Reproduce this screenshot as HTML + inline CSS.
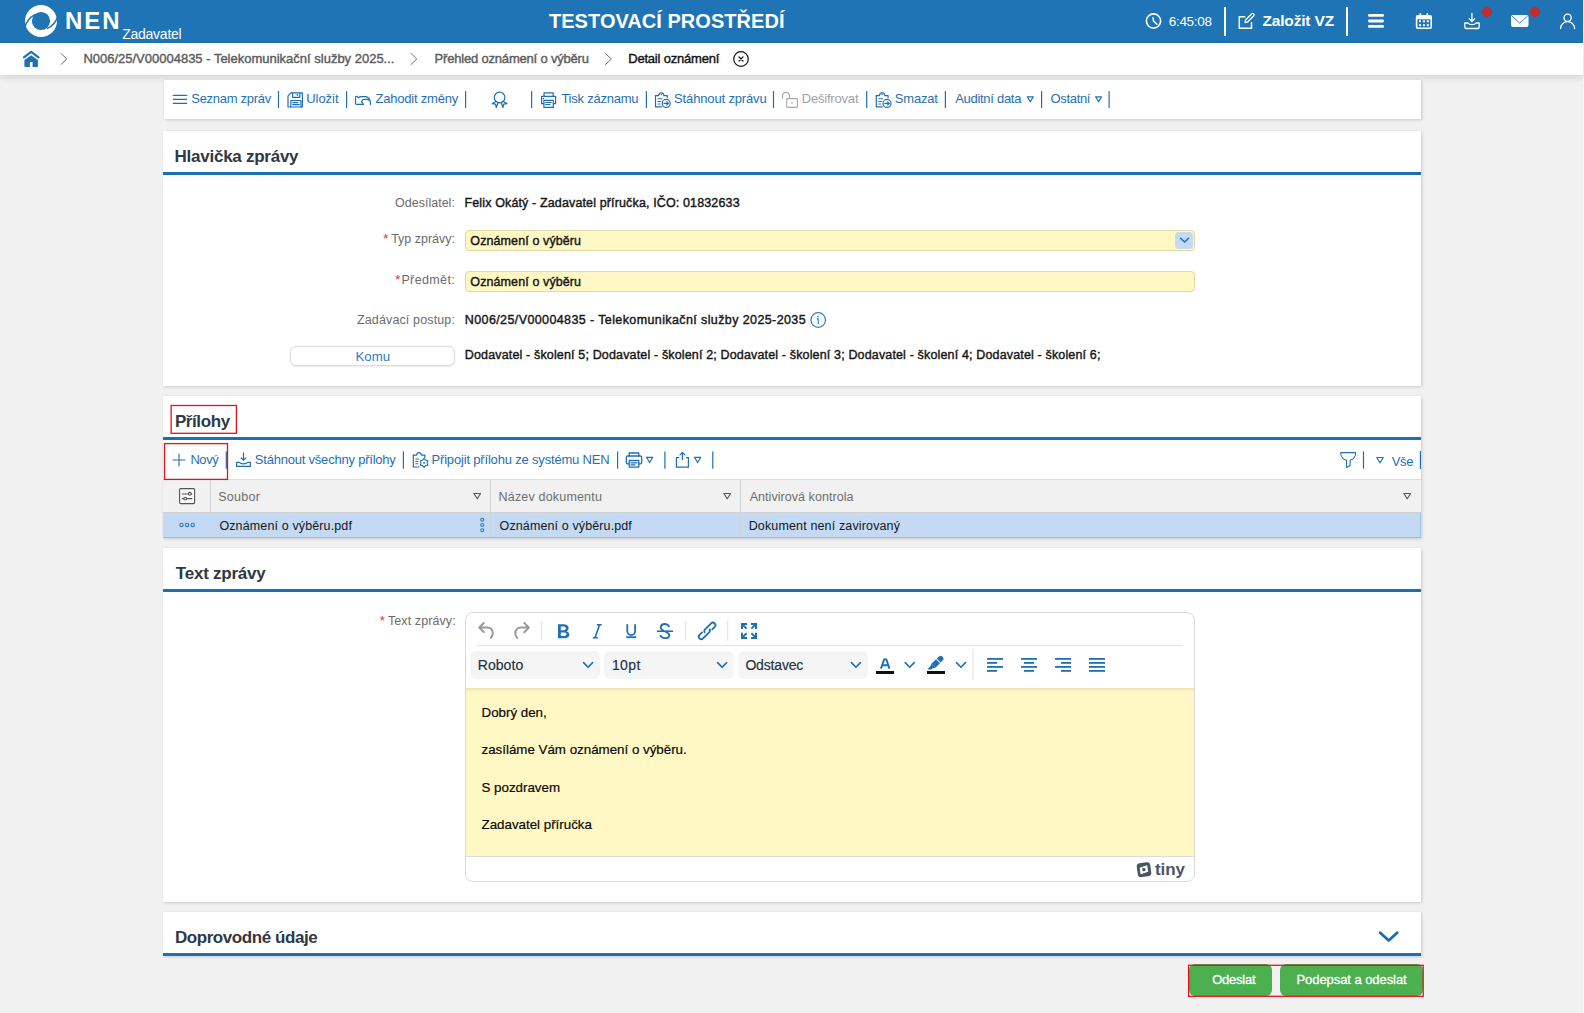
<!DOCTYPE html>
<html><head><meta charset="utf-8"><title>NEN</title><style>
html,body{margin:0;padding:0;}
body{width:1584px;height:1013px;overflow:hidden;background:#f1f1f1;position:relative;font-family:"Liberation Sans",sans-serif;}
.t{position:absolute;white-space:nowrap;line-height:1;}
.b{position:absolute;box-sizing:border-box;}
.card{position:absolute;background:#fff;box-shadow:1px 1px 3px rgba(0,0,0,0.16);}
svg.ov{position:absolute;left:0;top:0;}
</style></head>
<body>

<div class="b" style="left:0;top:0;width:1583px;height:43px;background:#1e74b4"></div>
<div class="b" style="left:1583px;top:0;width:1px;height:1013px;background:#f7f7f7"></div>
<div class="b" style="left:0;top:43px;width:1583px;height:32px;background:#fff;box-shadow:0 3px 6px rgba(0,0,0,0.11)"></div>
<div class="card" style="left:164px;top:80px;width:1257px;height:39px"></div>
<div class="card" style="left:163px;top:131px;width:1258px;height:255px"></div>
<div class="b" style="left:163px;top:172px;width:1258px;height:3px;background:#1b6fb2"></div>
<!-- select -->
<div class="b" style="left:465px;top:230px;width:730px;height:21px;background:#fff8c4;border:1px solid #e0d9a6;border-radius:4px"></div>
<div class="b" style="left:1175px;top:232px;width:18px;height:17px;background:#c3daf3;border-radius:4px"></div>
<div class="b" style="left:465px;top:271px;width:730px;height:21px;background:#fff8c4;border:1px solid #e0d9a6;border-radius:4px"></div>
<div class="b" style="left:290px;top:346px;width:165px;height:20px;background:#fff;border:1px solid #dcdcdc;border-radius:6px;box-shadow:0 1px 2px rgba(0,0,0,0.08)"></div>
<!-- prilohy -->
<div class="card" style="left:163px;top:396px;width:1258px;height:142px"></div>
<div class="b" style="left:163px;top:437px;width:1258px;height:3px;background:#1b6fb2"></div>
<div class="b" style="left:163px;top:479px;width:1258px;height:33px;background:#f1f1f1;border-top:1px solid #dedede"></div>
<div class="b" style="left:163px;top:512px;width:1258px;height:26px;background:#c4daf4;border-top:1px solid #d2d2d2;border-bottom:1px solid #8fbbec;border-right:1px solid #9dc2ec"></div>
<div class="b" style="left:210px;top:480px;width:1px;height:32px;background:#d3d3d3"></div>
<div class="b" style="left:490px;top:480px;width:1px;height:57px;background:#d3d3d3"></div>
<div class="b" style="left:740px;top:480px;width:1px;height:57px;background:#d3d3d3"></div>
<!-- text zpravy -->
<div class="card" style="left:163px;top:548px;width:1258px;height:354px"></div>
<div class="b" style="left:163px;top:589px;width:1258px;height:3px;background:#1b6fb2"></div>
<div class="b" style="left:465px;top:612px;width:730px;height:270px;background:#fff;border:1px solid #dadada;border-radius:8px"></div>
<div class="b" style="left:477px;top:645px;width:706px;height:1px;background:#e3e3e3"></div>
<div class="b" style="left:470px;top:651px;width:130px;height:28px;background:#f5f5f5;border-radius:6px"></div>
<div class="b" style="left:604px;top:651px;width:130px;height:28px;background:#f5f5f5;border-radius:6px"></div>
<div class="b" style="left:738px;top:651px;width:130px;height:28px;background:#f5f5f5;border-radius:6px"></div>
<div class="b" style="left:466px;top:688px;width:728px;height:169px;background:#fff8c4;border-bottom:1px solid #dcdcdc;box-shadow:inset 0 4px 4px -3px rgba(0,0,0,0.12)"></div>
<!-- doprovodne -->
<div class="card" style="left:163px;top:912px;width:1258px;height:44px"></div>
<div class="b" style="left:163px;top:953px;width:1258px;height:3px;background:#1b6fb2"></div>
<!-- buttons -->
<div class="b" style="left:1189px;top:964px;width:83px;height:32px;background:#4caf50;border-radius:6px"></div>
<div class="b" style="left:1280px;top:964px;width:143px;height:32px;background:#4caf50;border-radius:6px"></div>

<div class="t" style="left:65.0px;top:9px;font-size:24px;font-weight:700;letter-spacing:2.0px;color:#fff;">NEN</div>
<div class="t" style="left:122.2px;top:27px;font-size:14px;font-weight:400;letter-spacing:-0.25px;color:#fff;">Zadavatel</div>
<div class="t" style="left:549.0px;top:11px;font-size:20px;font-weight:700;letter-spacing:0.033px;color:#fff;">TESTOVACÍ PROSTŘEDÍ</div>
<div class="t" style="left:1168.7px;top:15px;font-size:13.5px;font-weight:400;letter-spacing:-0.283px;color:#fff;">6:45:08</div>
<div class="t" style="left:1262.4px;top:13px;font-size:15.5px;font-weight:700;letter-spacing:-0.156px;color:#fff;">Založit VZ</div>
<div class="t" style="left:83.4px;top:52px;font-size:13px;font-weight:400;letter-spacing:-0.004px;color:#5c5c5c;-webkit-text-stroke:0.4px #5c5c5c;">N006/25/V00004835 - Telekomunikační služby 2025...</div>
<div class="t" style="left:434.6px;top:52px;font-size:13px;font-weight:400;letter-spacing:-0.192px;color:#5c5c5c;-webkit-text-stroke:0.4px #5c5c5c;">Přehled oznámení o výběru</div>
<div class="t" style="left:628.2px;top:52px;font-size:13px;font-weight:400;letter-spacing:-0.2px;color:#111;-webkit-text-stroke:0.4px #111;">Detail oznámení</div>
<div class="t" style="left:191.3px;top:92px;font-size:13px;font-weight:400;letter-spacing:-0.291px;color:#1f6fb3;">Seznam zpráv</div>
<div class="t" style="left:306.2px;top:92px;font-size:13px;font-weight:400;letter-spacing:-0.04px;color:#1f6fb3;">Uložit</div>
<div class="t" style="left:375.4px;top:92px;font-size:13px;font-weight:400;letter-spacing:-0.2px;color:#1f6fb3;">Zahodit změny</div>
<div class="t" style="left:561.4px;top:92px;font-size:13px;font-weight:400;letter-spacing:-0.227px;color:#1f6fb3;">Tisk záznamu</div>
<div class="t" style="left:674.1px;top:92px;font-size:13px;font-weight:400;letter-spacing:-0.15px;color:#1f6fb3;">Stáhnout zprávu</div>
<div class="t" style="left:801.7px;top:92px;font-size:13px;font-weight:400;letter-spacing:-0.189px;color:#a3a3a3;">Dešifrovat</div>
<div class="t" style="left:894.8px;top:92px;font-size:13px;font-weight:400;letter-spacing:-0.18px;color:#1f6fb3;">Smazat</div>
<div class="t" style="left:955.2px;top:92px;font-size:13px;font-weight:400;letter-spacing:-0.291px;color:#1f6fb3;">Auditní data</div>
<div class="t" style="left:1050.6px;top:92px;font-size:13px;font-weight:400;letter-spacing:-0.35px;color:#1f6fb3;">Ostatní</div>
<div class="t" style="left:174.6px;top:148px;font-size:17px;font-weight:700;letter-spacing:-0.257px;color:#303842;">Hlavička zprávy</div>
<div class="t" style="left:395.0px;top:197px;font-size:12.5px;font-weight:400;letter-spacing:0.01px;color:#6b6b6b;">Odesílatel:</div>
<div class="t" style="left:464.5px;top:197px;font-size:12.5px;font-weight:400;letter-spacing:0.135px;color:#161616;-webkit-text-stroke:0.4px #161616;">Felix Okátý - Zadavatel příručka, IČO: 01832633</div>
<div class="t" style="left:383.3px;top:232px;font-size:13px;font-weight:400;letter-spacing:0px;color:#d9303a;">*</div>
<div class="t" style="left:391.2px;top:233px;font-size:12.5px;font-weight:400;letter-spacing:-0.01px;color:#6b6b6b;">Typ zprávy:</div>
<div class="t" style="left:470.3px;top:234.5px;font-size:12.5px;font-weight:400;letter-spacing:0.106px;color:#161616;-webkit-text-stroke:0.4px #161616;">Oznámení o výběru</div>
<div class="t" style="left:395.3px;top:273px;font-size:13px;font-weight:400;letter-spacing:0px;color:#d9303a;">*</div>
<div class="t" style="left:401.4px;top:274px;font-size:12.5px;font-weight:400;letter-spacing:0.371px;color:#6b6b6b;">Předmět:</div>
<div class="t" style="left:470.3px;top:276px;font-size:12.5px;font-weight:400;letter-spacing:0.106px;color:#161616;-webkit-text-stroke:0.4px #161616;">Oznámení o výběru</div>
<div class="t" style="left:357.0px;top:314px;font-size:12.5px;font-weight:400;letter-spacing:0.133px;color:#6b6b6b;">Zadávací postup:</div>
<div class="t" style="left:464.8px;top:314px;font-size:12.5px;font-weight:400;letter-spacing:0.392px;color:#161616;-webkit-text-stroke:0.4px #161616;">N006/25/V00004835 - Telekomunikační služby 2025-2035</div>
<div class="t" style="left:355.5px;top:350px;font-size:13.3px;font-weight:400;letter-spacing:-0.067px;color:#2f7dc0;">Komu</div>
<div class="t" style="left:464.8px;top:349px;font-size:12.5px;font-weight:400;letter-spacing:0.152px;color:#161616;-webkit-text-stroke:0.4px #161616;">Dodavatel - školení 5; Dodavatel - školení 2; Dodavatel - školení 3; Dodavatel - školení 4; Dodavatel - školení 6;</div>
<div class="t" style="left:174.9px;top:413px;font-size:17px;font-weight:700;letter-spacing:-0.4px;color:#303842;">Přílohy</div>
<div class="t" style="left:190.4px;top:453px;font-size:13px;font-weight:400;letter-spacing:-0.433px;color:#1f6fb3;">Nový</div>
<div class="t" style="left:254.8px;top:453px;font-size:13px;font-weight:400;letter-spacing:-0.213px;color:#1f6fb3;">Stáhnout všechny přílohy</div>
<div class="t" style="left:431.5px;top:453px;font-size:13px;font-weight:400;letter-spacing:-0.177px;color:#1f6fb3;">Připojit přílohu ze systému NEN</div>
<div class="t" style="left:1391.7px;top:455px;font-size:13px;font-weight:400;letter-spacing:-0.35px;color:#1f6fb3;">Vše</div>
<div class="t" style="left:218.2px;top:491px;font-size:12.5px;font-weight:400;letter-spacing:0.3px;color:#6e6e6e;">Soubor</div>
<div class="t" style="left:498.6px;top:491px;font-size:12.5px;font-weight:400;letter-spacing:0.179px;color:#6e6e6e;">Název dokumentu</div>
<div class="t" style="left:749.7px;top:491px;font-size:12.5px;font-weight:400;letter-spacing:0.05px;color:#6e6e6e;">Antivirová kontrola</div>
<div class="t" style="left:219.4px;top:520px;font-size:12.5px;font-weight:400;letter-spacing:0.13px;color:#161616;">Oznámení o výběru.pdf</div>
<div class="t" style="left:499.6px;top:520px;font-size:12.5px;font-weight:400;letter-spacing:0.115px;color:#161616;">Oznámení o výběru.pdf</div>
<div class="t" style="left:748.7px;top:520px;font-size:12.5px;font-weight:400;letter-spacing:0.143px;color:#161616;">Dokument není zavirovaný</div>
<div class="t" style="left:175.8px;top:565px;font-size:17px;font-weight:700;letter-spacing:-0.23px;color:#303842;">Text zprávy</div>
<div class="t" style="left:379.8px;top:614px;font-size:13px;font-weight:400;letter-spacing:0px;color:#d9303a;">*</div>
<div class="t" style="left:387.9px;top:615px;font-size:12.5px;font-weight:400;letter-spacing:0.1px;color:#6b6b6b;">Text zprávy:</div>
<div class="t" style="left:477.7px;top:658px;font-size:14px;font-weight:400;letter-spacing:0.08px;color:#222f3e;-webkit-text-stroke:0.15px #222f3e;">Roboto</div>
<div class="t" style="left:611.9px;top:658px;font-size:14px;font-weight:400;letter-spacing:0.433px;color:#222f3e;-webkit-text-stroke:0.15px #222f3e;">10pt</div>
<div class="t" style="left:745.4px;top:658px;font-size:14px;font-weight:400;letter-spacing:-0.171px;color:#222f3e;-webkit-text-stroke:0.15px #222f3e;">Odstavec</div>
<div class="t" style="left:481.5px;top:706px;font-size:13.33px;font-weight:400;letter-spacing:0px;color:#0a0a0a;-webkit-text-stroke:0.2px #0a0a0a;">Dobrý den,</div>
<div class="t" style="left:481.5px;top:743px;font-size:13.33px;font-weight:400;letter-spacing:0px;color:#0a0a0a;-webkit-text-stroke:0.2px #0a0a0a;">zasíláme Vám oznámení o výběru.</div>
<div class="t" style="left:481.5px;top:781px;font-size:13.33px;font-weight:400;letter-spacing:0px;color:#0a0a0a;-webkit-text-stroke:0.2px #0a0a0a;">S pozdravem</div>
<div class="t" style="left:481.5px;top:818px;font-size:13.33px;font-weight:400;letter-spacing:0px;color:#0a0a0a;-webkit-text-stroke:0.2px #0a0a0a;">Zadavatel příručka</div>
<div class="t" style="left:1155.0px;top:861px;font-size:17px;font-weight:700;letter-spacing:-0.067px;color:#4a5563;">tiny</div>
<div class="t" style="left:174.9px;top:929px;font-size:17px;font-weight:700;letter-spacing:-0.42px;color:#303842;">Doprovodné údaje</div>
<div class="t" style="left:1212.2px;top:973px;font-size:13px;font-weight:400;letter-spacing:-0.233px;color:#fff;-webkit-text-stroke:0.3px #fff;">Odeslat</div>
<div class="t" style="left:1296.5px;top:973px;font-size:13px;font-weight:400;letter-spacing:-0.065px;color:#fff;-webkit-text-stroke:0.3px #fff;">Podepsat a odeslat</div>
<svg class="ov" width="1584" height="1013" viewBox="0 0 1584 1013">
<g fill="none" stroke-linecap="round" stroke-linejoin="round">
<!-- logo -->
<circle cx="41" cy="21" r="12.55" stroke="#fff" stroke-width="6.9"/>
<path d="M34.3,14.9 Q27.5,19 24.8,27.2" stroke="#1e74b4" stroke-width="1.5"/>
<path d="M57.4,17.2 Q55,24.8 47.4,28.4" stroke="#1e74b4" stroke-width="1.5"/>
<!-- clock -->
<circle cx="1153.5" cy="21" r="7.1" stroke="#fff" stroke-width="1.6"/>
<path d="M1153,17.8 L1153.5,20.9 L1156.9,24.2" stroke="#fff" stroke-width="1.5"/>
<!-- edit -->
<path d="M1245.3,16.7 H1239.3 V28.2 H1251.5 V22.3" stroke="#fff" stroke-width="1.5" stroke-linecap="butt" stroke-linejoin="miter"/>
<path d="M1245.2,22.6 L1245.5,19.9 L1251.5,13.9 a1.45,1.45 0 0 1 2.1,2.1 L1247.6,22 Z" stroke="#fff" stroke-width="1.4"/>
<!-- dividers -->
<rect x="1224" y="7" width="2" height="29" fill="#fff" stroke="none"/>
<rect x="1346" y="7" width="2" height="29" fill="#fff" stroke="none"/>
<!-- hamburger -->
<rect x="1368" y="14" width="16" height="2.8" rx="1.4" fill="#fff" stroke="none"/>
<rect x="1368" y="19.6" width="16" height="2.8" rx="1.4" fill="#fff" stroke="none"/>
<rect x="1368" y="25" width="16" height="2.8" rx="1.4" fill="#fff" stroke="none"/>
<!-- calendar -->
<rect x="1416.6" y="15.7" width="14.6" height="12.5" rx="1.2" stroke="#fff" stroke-width="1.6"/>
<rect x="1416.6" y="15.7" width="14.6" height="3.6" fill="#fff" stroke="none"/>
<path d="M1420.3,13.2 V16 M1427.3,13.2 V16" stroke="#fff" stroke-width="1.7" stroke-linecap="butt"/>
<g fill="#fff" stroke="none">
<rect x="1419" y="20.3" width="2" height="2"/><rect x="1422.9" y="20.3" width="2" height="2"/><rect x="1426.8" y="20.3" width="2" height="2"/>
<rect x="1419" y="24.2" width="2" height="2"/><rect x="1422.9" y="24.2" width="2" height="2"/><rect x="1426.8" y="24.2" width="2" height="2"/>
</g>
<!-- download -->
<path d="M1471.9,13.5 V21.3 M1469.2,18.8 L1471.9,21.5 L1474.6,18.8" stroke="#fff" stroke-width="1.3"/>
<path d="M1464.8,23 V27.3 a1.2,1.2 0 0 0 1.2,1.2 H1478 a1.2,1.2 0 0 0 1.2,-1.2 V23 H1476 C1475.4,24 1474,24.6 1472,24.6 C1470,24.6 1468.6,24 1468,23 Z" stroke="#fff" stroke-width="1.3"/>
<circle cx="1487" cy="12" r="5" fill="#c62a2a" stroke="none"/>
<!-- mail -->
<rect x="1511" y="15" width="17.5" height="12" rx="2" fill="#fff" stroke="none"/>
<path d="M1512.2,16.3 L1519.75,23.2 L1527.3,16.3" stroke="#1e74b4" stroke-width="0.9"/>
<circle cx="1535" cy="12" r="5" fill="#c62a2a" stroke="none"/>
<!-- user -->
<circle cx="1567.6" cy="17.8" r="3.6" stroke="#fff" stroke-width="1.3"/>
<path d="M1560.6,28.6 a7,7 0 0 1 14,0" stroke="#fff" stroke-width="1.3"/>

<!-- breadcrumb -->
<path d="M23.9,57.3 L31.2,51.8 L38.5,57.3" stroke="#1f6fb3" stroke-width="2.1"/>
<path d="M24.4,60.1 L31.2,55.2 L37.9,60.1 V66.2 a0.7,0.7 0 0 1 -0.7,0.7 H32.6 V61.9 H29.9 V66.9 H25.1 a0.7,0.7 0 0 1 -0.7,-0.7 Z" fill="#1f6fb3" stroke="none"/>
<path d="M61,53.5 L66.8,59 L61,64.5" stroke="#707070" stroke-width="1"/>
<path d="M411,53.5 L416.8,59 L411,64.5" stroke="#707070" stroke-width="1"/>
<path d="M605.5,53.5 L611.3,59 L605.5,64.5" stroke="#707070" stroke-width="1"/>
<circle cx="741" cy="59" r="7.3" stroke="#111" stroke-width="1.2"/>
<path d="M739,57 L743,61 M743,57 L739,61" stroke="#111" stroke-width="1.2"/>

<!-- toolbar -->
<g stroke="#1f6fb3" stroke-width="1.3">
<path d="M173.3,95.3 H186.7 M173.3,99.3 H186.7 M173.3,103.3 H186.7"/>
<!-- save -->
<path d="M291,92.9 H302.4 V107 H288 V95.9 Z" stroke-width="1.2"/>
<path d="M292.6,93 V97.3 H299.8 V93" stroke-width="1.2"/>
<path d="M297.4,94.3 V95.3" stroke-width="1.2"/>
<path d="M290.9,107 V100.5 H300.9 V107" stroke-width="1.2"/>
<path d="M292.8,102.6 H298 M292.8,104.6 H299.3" stroke-width="1.1"/>
<!-- zahodit -->
<path d="M363.4,104.4 H356.4 a0.9,0.9 0 0 1 -0.9,-0.9 V97.3 a0.9,0.9 0 0 1 0.9,-0.9 H357.3 C358,97.9 359.3,97.9 359.9,96.6 H365.7 C368.6,97 370.6,100 370.6,104.6" stroke-width="1.2"/>
<path d="M363.4,104.4 L361.5,101.6 C362,100.1 362.9,99.4 364.1,99.4 H367.6 C368.4,99.5 368.9,99.9 369.3,100.6" stroke-width="1.2"/>
<!-- award -->
<circle cx="499.6" cy="97.5" r="5.3" stroke-width="1.2"/>
<path d="M496,101.5 L492.3,103.6 L495.5,104.2 L496.3,107.6 L498,102.8" stroke-width="1.2"/>
<path d="M503.2,101.5 L506.9,103.6 L503.7,104.2 L502.9,107.6 L501.2,102.8" stroke-width="1.2"/>
<!-- print -->
<path d="M544,96.2 V92.9 H553.2 V96.2" stroke-width="1.2"/>
<path d="M543.9,103.7 H541.6 V96.4 H555.6 V103.7 H553.3" stroke-width="1.2"/>
<rect x="543.9" y="100.4" width="9.4" height="7" stroke-width="1.2"/>
<path d="M545.6,102.5 H551.2 M545.6,104.5 H549.8" stroke-width="1.1"/>
<path d="M543.2,98.6 H543.8" stroke-width="1.1"/>
<!-- stahnout zpravu -->
<path d="M655.5,95.6 V106.8 H661.5" stroke-width="1.2"/>
<path d="M655.5,95.6 H658.6 C658.8,93.8 659.8,92.8 661.3,92.8 C662.8,92.8 663.8,93.8 664,95.6 H667.3 V97.6" stroke-width="1.2"/>
<path d="M661.3,94.6 V94.7" stroke-width="1.3"/>
<path d="M658,98.8 H661.8 M658,101.5 H660.8 M658,104 H660" stroke-width="1.1"/>
<circle cx="666.2" cy="103.4" r="4" stroke-width="1.2"/>
<path d="M664,103.4 H667.6" stroke-width="1.2"/>
<path d="M666.9,101.6 L669,103.4 L666.9,105.2 Z" fill="#1f6fb3" stroke-width="0.6"/>
<!-- smazat -->
<path d="M876.3,95.6 V106.8 H882.3" stroke-width="1.2"/>
<path d="M876.3,95.6 H879.4 C879.6,93.8 880.6,92.8 882.1,92.8 C883.6,92.8 884.6,93.8 884.8,95.6 H888.1 V97.6" stroke-width="1.2"/>
<path d="M882.1,94.6 V94.7" stroke-width="1.3"/>
<path d="M878.8,98.8 H882.6 M878.8,101.5 H881.6 M878.8,104 H880.8" stroke-width="1.1"/>
<circle cx="887" cy="103.4" r="4" stroke-width="1.2"/>
<path d="M884.8,103.4 H888.4" stroke-width="1.2"/>
<path d="M887.7,101.6 L889.8,103.4 L887.7,105.2 Z" fill="#1f6fb3" stroke-width="0.6"/>
<!-- triangles -->
<path d="M1027.3,96.8 H1033.3 L1030.3,101.8 Z" stroke-width="1.2"/>
<path d="M1095.6,96.8 H1101.6 L1098.6,101.8 Z" stroke-width="1.2"/>
</g>
<!-- lock (gray) -->
<g stroke="#a6a6a6" stroke-width="1.1">
<rect x="786.7" y="98.6" width="10.8" height="8.8" rx="0.8"/>
<path d="M782.6,98.4 V95.8 a3.45,3.45 0 0 1 6.9,0 V98.4"/>
<path d="M792,102.4 V103.2"/>
</g>
<g fill="#1f6fb3" stroke="none">
<rect x="277.9" y="91" width="1.2" height="17" rx="0.6"/>
<rect x="346.0" y="91" width="1.2" height="17" rx="0.6"/>
<rect x="465.0" y="91" width="1.2" height="17" rx="0.6"/>
<rect x="531.0" y="91" width="1.2" height="17" rx="0.6"/>
<rect x="645.8" y="91" width="1.2" height="17" rx="0.6"/>
<rect x="772.9" y="91" width="1.2" height="17" rx="0.6"/>
<rect x="866.1" y="91" width="1.2" height="17" rx="0.6"/>
<rect x="944.8" y="91" width="1.2" height="17" rx="0.6"/>
<rect x="1041.0" y="91" width="1.2" height="17" rx="0.6"/>
<rect x="1108.5" y="91" width="1.2" height="17" rx="0.6"/>
</g>

<!-- hlavicka -->
<path d="M1180.6,238.2 L1184.6,242 L1188.6,238.2" stroke="#1f6fb3" stroke-width="1.5"/>
<circle cx="818.2" cy="320" r="7.3" stroke="#2f7dc0" stroke-width="1.2"/>
<circle cx="818" cy="316.6" r="0.8" fill="#2f7dc0" stroke="none"/>
<path d="M817.2,318.8 H818.3 V323.6" stroke="#2f7dc0" stroke-width="1.2"/>

<!-- prilohy toolbar -->
<g stroke="#1f6fb3" stroke-width="1.3">
<path d="M179,454 V466 M173,460 H185" stroke-width="1.1"/>
<path d="M243.5,452.9 V459.8 M241.2,458 L243.5,460.1 L245.8,458" stroke-width="1.2"/>
<path d="M236.6,462.4 V466.4 H250.4 V462.4 H247.6 C247,463.3 245.5,463.9 243.5,463.9 C241.5,463.9 240,463.3 239.4,462.4 Z" stroke-width="1.2"/>
<!-- clipboard gear -->
<path d="M413.3,455.2 V467 H419" stroke-width="1.2"/>
<path d="M413.3,455.2 H416.6 C416.8,453.6 417.8,452.7 419,452.7 C420.2,452.7 421.2,453.6 421.4,455.2 H424.8 V457.4" stroke-width="1.2"/>
<path d="M415.8,459 H418.8 M415.8,461.5 H417.8 M415.8,463.8 H417.8" stroke-width="1.1"/>
<path d="M424.1,458.4 L425.6,460.2 L427.9,460.7 L427.2,462.9 L427.9,465.1 L425.6,465.6 L424.1,467.4 L422.6,465.6 L420.3,465.1 L421,462.9 L420.3,460.7 L422.6,460.2 Z" stroke-width="1.1"/>
<circle cx="424.1" cy="462.9" r="0.9" fill="#1f6fb3" stroke="none"/>
<!-- print -->
<path d="M629.2,456 V453 H638.8 V456"/>
<path d="M629,463.8 H627.6 a1.3,1.3 0 0 1 -1.3,-1.3 V457.3 a1.3,1.3 0 0 1 1.3,-1.3 H640.4 a1.3,1.3 0 0 1 1.3,1.3 V462.5 a1.3,1.3 0 0 1 -1.3,1.3 H639"/>
<rect x="629.2" y="460.5" width="9.6" height="6.6"/>
<path d="M631,462.8 H637 M631,464.8 H635"/>
<path d="M646.5,457.3 H652.8 L649.65,462.5 Z" stroke-width="1.2"/>
<!-- share -->
<path d="M678.8,457.6 H676.4 V467.2 H688.4 V457.6 H686.3" stroke-width="1.2"/>
<path d="M682.4,452.4 V459.6 M680,454.8 L682.4,452.3 L684.8,454.8" stroke-width="1.2"/>
<path d="M694.5,457.3 H700.8 L697.65,462.5 Z" stroke-width="1.2"/>
<!-- filter -->
<path d="M1340.7,452.6 H1355.6 C1355.9,456.6 1353.2,459.4 1350.1,460.2 V465.6 L1346.6,467.4 V460.2 C1343.4,459.4 1340.4,456.6 1340.7,452.6 Z" stroke-width="1.1"/>
<path d="M1376.8,457.5 H1383.3 L1380.05,462.8 Z" stroke-width="1.2"/>
</g>
<g fill="#1f6fb3" stroke="none">
<rect x="225.7" y="451.3" width="1.2" height="17.5" rx="0.6"/>
<rect x="402.8" y="451.3" width="1.2" height="17.5" rx="0.6"/>
<rect x="617.0" y="451.3" width="1.2" height="17.5" rx="0.6"/>
<rect x="664.3" y="451.3" width="1.2" height="17.5" rx="0.6"/>
<rect x="712.2" y="451.3" width="1.2" height="17.5" rx="0.6"/>
<rect x="1362.9" y="451.3" width="1.2" height="17.5" rx="0.6"/>
<rect x="1419.8" y="451" width="1.2" height="18"/>
</g>
<!-- table -->
<g stroke="#555" stroke-width="1.1">
<rect x="179.6" y="488.6" width="15" height="15" rx="1" fill="#fafafa"/>
<path d="M182.3,494 H191.8 M182.3,498.6 H191.8"/>
<circle cx="189.8" cy="493.8" r="1.4" fill="#fafafa"/>
<circle cx="185.2" cy="498.6" r="1.4" fill="#fafafa"/>
</g>
<g stroke="#555" stroke-width="1.1">
<path d="M473.9,493.5 H480.6 L477.25,498.8 Z"/>
<path d="M723.9,493.5 H730.6 L727.25,498.8 Z"/>
<path d="M1403.9,493.5 H1410.6 L1407.25,498.8 Z"/>
</g>
<g stroke="#2d78c8" stroke-width="1.1">
<circle cx="181.5" cy="524.9" r="1.7"/><circle cx="187.1" cy="524.9" r="1.7"/><circle cx="192.7" cy="524.9" r="1.7"/>
<circle cx="482.2" cy="519.8" r="1.5"/><circle cx="482.2" cy="525" r="1.5"/><circle cx="482.2" cy="530.2" r="1.5"/>
</g>

<!-- editor toolbar -->
<g stroke="#9a9a9a" stroke-width="2">
<path d="M483.8,623 L479.2,627.5 L483.8,632 M479.4,627.5 H487.5 a5.3,5.3 0 0 1 5.3,5.3 C492.8,634.8 492.3,636.8 490.8,638"/>
<path d="M524.3,623 L528.9,627.6 L524.3,632.2 M528.7,627.6 H520.6 a5.3,5.3 0 0 0 -5.3,5.3 C515.3,634.9 515.8,636.8 517.3,638"/>
</g>
<rect x="541.2" y="621" width="1" height="20" fill="#e2e2e2" stroke="none"/>
<rect x="685.2" y="621" width="1" height="20" fill="#e2e2e2" stroke="none"/>
<rect x="727.2" y="621" width="1" height="20" fill="#e2e2e2" stroke="none"/>
<rect x="972.5" y="649" width="1" height="31" fill="#e2e2e2" stroke="none"/>
<g fill="#1f6fb3" stroke="none">
<path d="M558,624.3 H563.6 C566.8,624.3 568.6,625.8 568.6,628.2 C568.6,629.8 567.6,630.8 566.4,631.2 C568,631.6 569.4,632.8 569.4,634.6 C569.4,637 567.4,638.3 564.2,638.3 H558 Z M560.8,626.6 V630.2 H563.4 C565,630.2 565.8,629.6 565.8,628.4 C565.8,627.2 565,626.6 563.4,626.6 Z M560.8,632.4 V636 H563.8 C565.6,636 566.5,635.4 566.5,634.2 C566.5,633 565.6,632.4 563.8,632.4 Z"/>
</g>
<g stroke="#1f6fb3" stroke-width="1.6" stroke-linecap="butt">
<path d="M596.8,624.8 H601.8 M592.8,637.8 H597.8 M599.6,624.8 L595,637.8"/>
<path d="M627.3,624.3 V631.2 a3.9,3.9 0 0 0 7.8,0 V624.3" stroke-width="1.8"/>
<path d="M626.2,637.2 H636.2" stroke-width="1.8"/>
<path d="M657,631.2 H673"/>
<path d="M669,626.3 C668,624.6 666.5,624 665,624 C662.5,624 660.8,625.5 660.8,627.4 C660.8,628.8 661.6,629.8 663.5,630.6 M665.8,632 C667.8,632.8 669.3,633.8 669.3,635.2 C669.3,637 667.5,638.2 665,638.2 C663,638.2 661.3,637.4 660.4,635.7" stroke-width="1.8" stroke-linecap="round"/>
<!-- link -->
<g transform="translate(707.1,630.9) rotate(-45)" stroke-width="1.8">
<path d="M4,2.5 H8.2 A2.5,2.5 0 0 0 8.2,-2.5 H-0.4 A2.5,2.5 0 0 0 -2.9,0"/>
<path d="M-4,-2.5 H-8.2 A2.5,2.5 0 0 0 -8.2,2.5 H0.4 A2.5,2.5 0 0 0 2.9,0"/>
</g>
</g>
<!-- fullscreen -->
<g stroke="#1f6fb3" stroke-width="2" stroke-linecap="butt" stroke-linejoin="miter">
<path d="M742,629 V624 H747"/><path d="M742.5,624.5 L746.6,628.6"/>
<path d="M756,629 V624 H751"/><path d="M755.5,624.5 L751.4,628.6"/>
<path d="M742,632.8 V637.9 H747"/><path d="M742.5,637.4 L746.6,633.3"/>
<path d="M756,632.8 V637.9 H751"/><path d="M755.5,637.4 L751.4,633.3"/>
</g>
<g stroke="#1f6fb3" stroke-width="1.6">
<path d="M583.6,662.6 L588.1,667.3 L592.6,662.6"/>
<path d="M717.6,662.6 L722.1,667.3 L726.6,662.6"/>
<path d="M851.4,662.6 L855.9,667.3 L860.4,662.6"/>
<path d="M905.2,662.6 L909.7,667.3 L914.2,662.6"/>
<path d="M956.5,662.6 L961,667.3 L965.5,662.6"/>
</g>
<path d="M880.9,668.6 L884.1,659.4 H886.3 L889.5,668.6 M882.1,665.3 H888.3" stroke="#1f6fb3" stroke-width="1.9" stroke-linecap="butt" stroke-linejoin="miter"/>
<rect x="876" y="671" width="18" height="3" fill="#111" stroke="none"/>
<g transform="translate(935.7,663.5) rotate(-45)" fill="#1f6fb3" stroke="none">
<path d="M4.2,-2.8 H6.9 A2.8,2.8 0 0 1 6.9,2.8 H4.2 Z"/>
<path d="M3.3,-2.8 V2.8 H-3.3 V-2.8 Z"/>
</g>
<path d="M931.45,663.9 L930.2,666.4 L927.3,669.5 L931.2,669.5 L932.6,668.2 L935.4,667.8 Z" fill="#1f6fb3" stroke="none"/>
<rect x="927" y="671" width="18" height="3" fill="#111" stroke="none"/>
<g fill="#1f6fb3" stroke="none">
<rect x="987" y="658" width="16" height="1.8"/><rect x="987" y="662" width="10" height="1.8"/><rect x="987" y="666" width="16" height="1.8"/><rect x="987" y="670" width="10" height="1.8"/>
<rect x="1021" y="658" width="16" height="1.8"/><rect x="1024" y="662" width="10" height="1.8"/><rect x="1021" y="666" width="16" height="1.8"/><rect x="1024" y="670" width="10" height="1.8"/>
<rect x="1055" y="658" width="16" height="1.8"/><rect x="1061" y="662" width="10" height="1.8"/><rect x="1055" y="666" width="16" height="1.8"/><rect x="1061" y="670" width="10" height="1.8"/>
<rect x="1089" y="658" width="16" height="1.8"/><rect x="1089" y="662" width="16" height="1.8"/><rect x="1089" y="666" width="16" height="1.8"/><rect x="1089" y="670" width="16" height="1.8"/>
</g>
<!-- tiny logo -->
<g transform="translate(1144,869.7) rotate(-8)">
<rect x="-6.8" y="-7" width="13.6" height="14" rx="3.3" fill="#4a5563" stroke="none"/>
<path d="M-4,-2.5 L3.8,-4 V2.5 L-4,4 Z" fill="#fff" stroke="none"/>
<rect x="-1.6" y="-1.6" width="3" height="3" fill="#4a5563" stroke="none"/>
</g>
<!-- doprovodne chevron -->
<path d="M1380.2,932.7 L1388.7,940.6 L1397.2,932.7" stroke="#1a6aae" stroke-width="2.7"/>
<!-- red annotation boxes -->
<g stroke="#e3121c" stroke-width="1.3" stroke-linecap="butt" stroke-linejoin="miter">
<rect x="171.1" y="405.5" width="65.3" height="27.8"/>
<rect x="164.5" y="443.6" width="63" height="35.8"/>
<rect x="1188.6" y="965.3" width="234.6" height="31"/>
</g>
</g>

</svg>
</body></html>
